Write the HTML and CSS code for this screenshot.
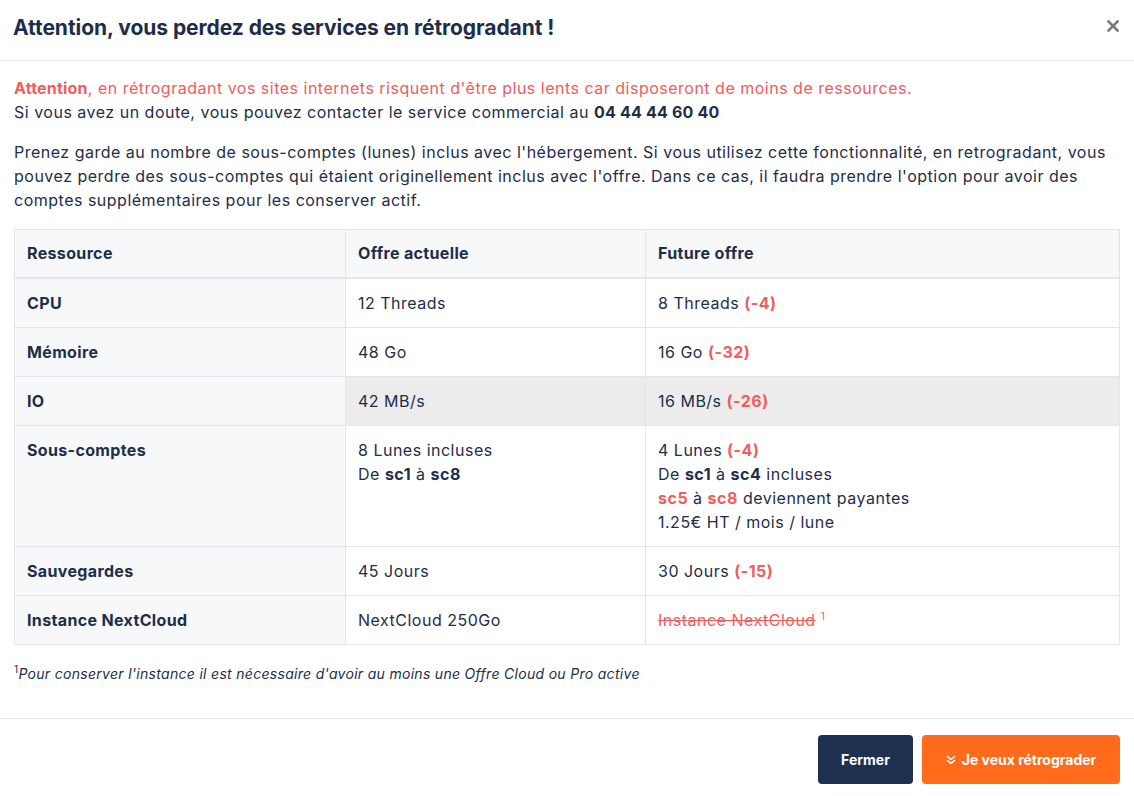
FILE: index.html
```html
<!DOCTYPE html>
<html lang="fr">
<head>
<meta charset="utf-8">
<title>Rétrogradation</title>
<link rel="stylesheet" href="styles.css">
</head>
<body>
<div class="modal">
  <div class="modal-header">
    <h2 class="modal-title">Attention, vous perdez des services en rétrogradant !</h2>
    <button class="close" aria-label="Fermer">
      <svg width="12" height="12" viewBox="0 0 12 12"><path d="M1.5 1.5L10.5 10.5M10.5 1.5L1.5 10.5" stroke="#7a7a7a" stroke-width="2.6" stroke-linecap="square"/></svg>
    </button>
  </div>
  <div class="modal-body">
    <p class="intro"><span class="danger"><strong>Attention</strong>, en rétrogradant vos sites internets risquent d'être plus lents car disposeront de moins de ressources.</span><br>Si vous avez un doute, vous pouvez contacter le service commercial au <strong>04 44 44 60 40</strong></p>
    <p class="text">Prenez garde au nombre de sous-comptes (lunes) inclus avec l'hébergement. Si vous utilisez cette fonctionnalité, en retrogradant, vous pouvez perdre des sous-comptes qui étaient originellement inclus avec l'offre. Dans ce cas, il faudra prendre l'option pour avoir des comptes supplémentaires pour les conserver actif.</p>
    <table class="compare">
      <thead>
        <tr><th class="c1">Ressource</th><th class="c2">Offre actuelle</th><th>Future offre</th></tr>
      </thead>
      <tbody>
        <tr><th>CPU</th><td>12 Threads</td><td>8 Threads <b class="minus">(-4)</b></td></tr>
        <tr><th>Mémoire</th><td>48 Go</td><td>16 Go <b class="minus">(-32)</b></td></tr>
        <tr class="hover"><th>IO</th><td>42 MB/s</td><td>16 MB/s <b class="minus">(-26)</b></td></tr>
        <tr><th>Sous-comptes</th><td>8 Lunes incluses<br>De <b>sc1</b> à <b>sc8</b></td><td>4 Lunes <b class="minus">(-4)</b><br>De <b>sc1</b> à <b>sc4</b> incluses<br><b class="minus">sc5</b> à <b class="minus">sc8</b> deviennent payantes<br>1.25€ HT / mois / lune</td></tr>
        <tr><th>Sauvegardes</th><td>45 Jours</td><td>30 Jours <b class="minus">(-15)</b></td></tr>
        <tr><th>Instance NextCloud</th><td>NextCloud 250Go</td><td><span class="removed"><s>Instance NextCloud</s> <sup>1</sup></span></td></tr>
      </tbody>
    </table>
    <p class="note"><sup>1</sup><em>Pour conserver l'instance il est nécessaire d'avoir au moins une Offre Cloud ou Pro active</em></p>
  </div>
  <div class="modal-footer">
    <button class="btn btn-dark">Fermer</button>
    <button class="btn btn-orange"><svg class="chev" width="10" height="10" viewBox="0 0 10 10"><path d="M1.5 1.5L5 4.5L8.5 1.5M1.5 5.5L5 8.5L8.5 5.5" fill="none" stroke="#fff" stroke-width="1.6" stroke-linecap="round" stroke-linejoin="round"/></svg>Je veux rétrograder</button>
  </div>
</div>
</body>
</html>
```
FILE: styles.css
```css
* { box-sizing: border-box; }
html, body { margin: 0; padding: 0; background: #fff; }
body {
  font-family: Inter, "Noto Sans", sans-serif;
  color: #1d2d4a;
  font-size: 16px;
  line-height: 24px;
  letter-spacing: 0.5px;
}
.modal { width: 1134px; }
.modal-header {
  display: flex;
  align-items: center;
  justify-content: space-between;
  height: 61px;
  padding: 0 14px 4px 13px;
  border-bottom: 1px solid #e3e5e8;
}
.modal-title {
  margin: 0;
  font-size: 21px;
  font-weight: 700;
  letter-spacing: -0.05px;
  color: #1d2d4a;
}
.close {
  border: 0;
  background: none;
  padding: 0;
  width: 14px;
  height: 14px;
  display: flex;
  align-items: center;
  justify-content: center;
  margin-top: -4px;
}
.modal-body { padding: 15px 14px 16px 14px; }
.modal-body p { margin: 0 0 16px 0; }
.intro strong { letter-spacing: 0.2px; }
.danger { color: #f25c5c; }
.danger strong { font-weight: 700; }
.text { margin-bottom: 17px !important; }
.compare {
  width: 100%;
  border-collapse: collapse;
  border: 1px solid #e3e5e8;
}
.compare th, .compare td {
  text-align: left;
  vertical-align: top;
  padding: 12px 12px;
  border: 1px solid #e3e5e8;
  font-size: 16px;
  line-height: 24px;
}
.compare th { font-weight: 700; letter-spacing: 0.35px; }
.compare td { font-weight: 400; }
.compare thead th {
  background: #f7f8fa;
  padding-top: 11px;
  padding-bottom: 12px;
  border-bottom: 2px solid #e3e5e8;
}
.compare tbody th { background: #f7f8fa; }
.compare .c1 { width: 331px; }
.compare .c2 { width: 300px; }
.compare tr.hover td { background: #ececec; }
.minus { color: #f25c5c; font-weight: 700; }
.compare b { font-weight: 700; }
.removed { color: #f25c5c; }
.removed sup, .note sup { font-size: 10px; line-height: 0; vertical-align: 6px; font-style: normal; }
.note {
  font-size: 14px;
  font-style: italic;
  letter-spacing: 0.3px;
  margin: 17px 0 16px 0 !important;
}
.note em { font-style: italic; }
.modal-footer {
  display: flex;
  justify-content: flex-end;
  gap: 9px;
  padding: 16px 14px 16px 14px;
  border-top: 1px solid #e3e5e8;
}
.btn {
  border: 0;
  height: 49px;
  border-radius: 4px;
  color: #fff;
  font-family: Inter, "Noto Sans", sans-serif;
  font-size: 14px;
  font-weight: 700;
  letter-spacing: 0;
  display: flex;
  align-items: center;
  justify-content: center;
}
.btn-dark { background: #1e3150; width: 95px; }
.btn-orange { background: #ff6b1a; width: 198px; gap: 6px; }
```
